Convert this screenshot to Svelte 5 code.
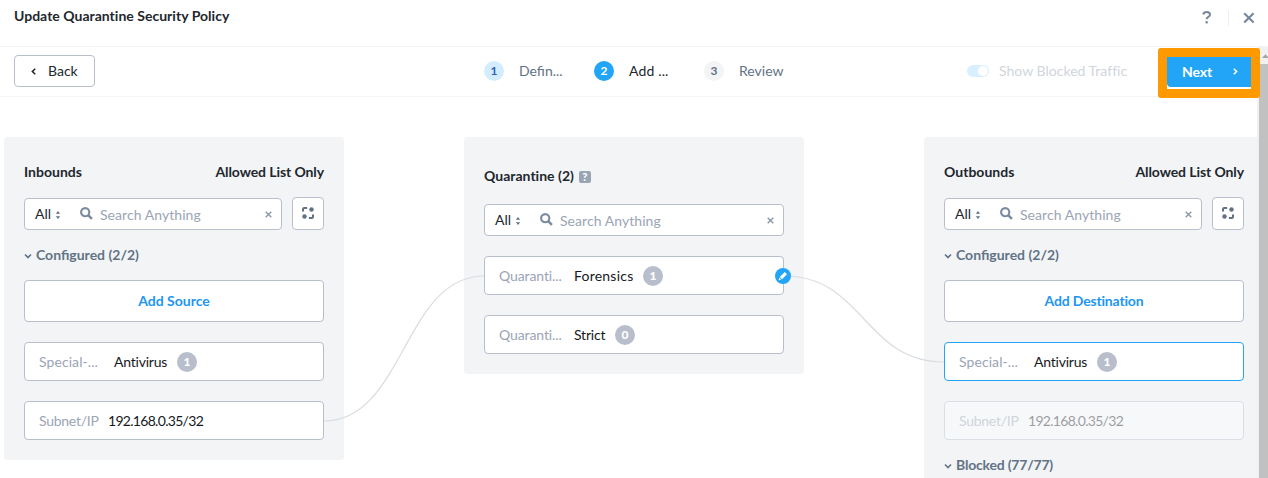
<script>
  const steps = [
    { n: 1, label: 'Defin...', state: 'done' },
    { n: 2, label: 'Add ...', state: 'current' },
    { n: 3, label: 'Review', state: 'todo' }
  ];
</script>

{#snippet search()}
  <div class="search">
    <span class="all">All</span>
    <svg class="sort" width="6" height="8" viewBox="0 0 6 8"><path d="M.8 2.7 3 0l2.2 2.7zM.8 5.3 3 8l2.2-2.7z" fill="#627386" /></svg>
    <svg class="lens" width="13" height="13" viewBox="0 0 13 13" fill="none" stroke="#7b8ba0" stroke-width="2.1"><circle cx="5.2" cy="5.2" r="4.1" /><path d="m8.2 8.2 3.7 3.7" stroke-width="2.5" /></svg>
    <span class="placeholder">Search Anything</span>
    <svg class="clear" width="7" height="7" viewBox="0 0 7 7"><path d="m.7.7 5.6 5.6M6.3.7.7 6.3" stroke="#8a98ab" stroke-width="1.4" /></svg>
  </div>
{/snippet}

{#snippet searchRow()}
  <div class="search-row">
    {@render search()}
    <button class="expand" aria-label="Expand">
      <svg width="12" height="12" viewBox="0 0 12 12" fill="none" stroke="#5f7183" stroke-width="2"><path d="M1 4.6V2.2Q1 1 2.2 1h2.9M11 7.4v2.4q0 1.2-1.2 1.2H6.9" /><circle cx="9.5" cy="2.5" r="2.2" fill="#5f7183" stroke="none" /><circle cx="2.5" cy="9.5" r="2.2" fill="#5f7183" stroke="none" /></svg>
    </button>
  </div>
{/snippet}

{#snippet section(label, blocked)}
  <div class="section" class:blocked>
    <svg width="8" height="6" viewBox="0 0 8 6" fill="none" stroke="#627386" stroke-width="1.6"><path d="m1 1.5 3 3 3-3" /></svg>
    <span>{label}</span>
  </div>
{/snippet}

{#snippet special()}
  <span class="kind fixed special">Special-...</span><span class="name antivirus">Antivirus</span><span class="count">1</span>
{/snippet}

{#snippet subnet()}
  <span class="kind subnet">Subnet/IP</span><span class="name ip">192.168.0.35/32</span>
{/snippet}

<div class="page">
  <header>
    <h1>Update Quarantine Security Policy</h1>
    <div class="header-actions">
      <svg class="help" width="10" height="13" viewBox="0 0 10 13" fill="none"><path d="M1.2 3.4C1.6 1.8 2.8 1 4.6 1c2 0 3.4 1 3.4 2.7C8 6 4.6 5.8 4.6 8.3" stroke="#76879d" stroke-width="2" /><path d="M3.5 10.2h2.3v2.2H3.5z" fill="#76879d" /></svg>
      <i></i>
      <svg width="12" height="12" viewBox="0 0 12 12"><path d="m1.2 1.2 9.4 9.4M10.6 1.2l-9.4 9.4" stroke="#76879d" stroke-width="2.1" /></svg>
    </div>
  </header>

  <div class="toolbar">
    <button class="back">
      <svg width="5" height="7" viewBox="0 0 5 7" fill="none" stroke="#22272e" stroke-width="1.6"><path d="M4.2.7 1.4 3.5l2.8 2.8" /></svg>
      <span>Back</span>
    </button>
    <div class="steps">
      {#each steps as s}
        <div class="step {s.state}"><b>{s.n}</b><span>{s.label}</span></div>
      {/each}
    </div>
    <div class="toggle"><i></i><span>Show Blocked Traffic</span></div>
    <div class="highlight">
      <button class="next">
        <span>Next</span>
        <svg width="5" height="7" viewBox="0 0 5 7" fill="none" stroke="#fff" stroke-width="1.6"><path d="M.8.7l2.8 2.8L.8 6.3" /></svg>
      </button>
    </div>
  </div>

  <main>
    <section class="panel">
      <div class="title"><h2>Inbounds</h2><h2 class="allowed">Allowed List Only</h2></div>
      {@render searchRow()}
      {@render section('Configured (2/2)', false)}
      <button class="card add">Add Source</button>
      <div class="card">{@render special()}</div>
      <div class="card">{@render subnet()}</div>
    </section>

    <section class="panel middle">
      <div class="title">
        <h2>Quarantine (2)</h2>
        <span class="hint">?</span>
      </div>
      {@render search()}
      <div class="card">
        <span class="kind fixed quaranti">Quaranti...</span><span class="name forensics">Forensics</span><span class="count">1</span>
        <span class="edit">
          <svg width="10" height="10" viewBox="0 0 10 10" fill="#fff"><path d="M6.8 1 9 3.2 4 8.2 1.8 6z" /><path d="m1.2 6.8 2 2L.7 9.3z" /></svg>
        </span>
      </div>
      <div class="card"><span class="kind fixed quaranti">Quaranti...</span><span class="name strict">Strict</span><span class="count">0</span></div>
    </section>

    <section class="panel out">
      <div class="title"><h2>Outbounds</h2><h2 class="allowed">Allowed List Only</h2></div>
      {@render searchRow()}
      {@render section('Configured (2/2)', false)}
      <button class="card add dst">Add Destination</button>
      <div class="card selected">{@render special()}</div>
      <div class="card faded">{@render subnet()}</div>
      {@render section('Blocked (77/77)', true)}
    </section>

    <svg class="links" width="1257" height="381" viewBox="0 97 1257 381" fill="none" stroke="#d9dce0" stroke-width="1.2">
      <path d="M324 421C404 421 404 276 484 276" />
      <path d="M784 276C864 276 864 362 944 362" />
    </svg>
    <div class="scrollbar">
      <svg width="9" height="17" viewBox="0 0 9 17"><path d="M3 11h7L6.5 7.2z" fill="#a3a3a3" /></svg>
      <div class="thumb"></div>
    </div>
  </main>
</div>

<style>
  :global(body) { margin: 0; overflow: hidden; background: #fff; }
  * { box-sizing: border-box; }
  .page {
    width: 1268px; height: 478px; overflow: hidden; display: flex; flex-direction: column;
    font: 14px/20px Lato, sans-serif; color: #22272e; white-space: nowrap;
  }
  button { font: inherit; color: inherit; margin: 0; }
  svg { display: block; flex: none; overflow: visible; }
  h1, h2 { margin: 0; font-size: 14px; font-weight: 700; line-height: 20px; letter-spacing: .02px; }
  header { height: 47px; flex: none; display: flex; justify-content: space-between; padding: 6px 13px 0 14px; border-bottom: 1px solid #f2f4f6; }
  .header-actions { display: flex; align-items: center; height: 24px; }
  .header-actions i { width: 1px; height: 16px; background: #eceef1; margin: 0 14px 0 16px; }
  .help { margin-top: -2px; }
  .toolbar { height: 50px; flex: none; display: flex; align-items: flex-start; padding: 0 8px 0 14px; border-bottom: 1px solid #f2f4f6; }
  .back { width: 81px; height: 32px; margin-top: 8px; padding: 0 0 0 16px; display: flex; align-items: center; gap: 12px; border: 1px solid #b8becc; border-radius: 4px; background: #fff; }
  .steps { display: flex; height: 48px; align-items: center; margin-left: 389px; }
  .step { width: 110px; display: flex; align-items: center; gap: 15px; color: #627386; }
  .step b { width: 20px; height: 20px; border-radius: 50%; text-align: center; font-size: 12px; background: #f2f4f6; }
  .done b { background: #d3edff; color: #3561b3; }
  .step.current { color: #22272e; letter-spacing: .15px; }
  .current b { background: #22a5f7; color: #fff; }
  .toggle { display: flex; align-items: center; height: 48px; gap: 10px; margin-left: 153px; color: #d0d5dd; letter-spacing: .02px; }
  .toggle i { width: 22px; height: 12px; border-radius: 6px; background: #d7effe; display: flex; justify-content: flex-end; padding: 1px; }
  .toggle i::after { content: ''; width: 10px; height: 10px; border-radius: 50%; background: #fff; }
  .highlight { width: 102px; height: 50px; margin: 1px 0 0 auto; border: 9px solid #ff9900; border-radius: 3px; background: #fff; position: relative; z-index: 3; }
  .next { width: 84px; height: 30px; border: 0; border-radius: 0 0 0 4px; background: #22a5f7; color: #fff; display: flex; align-items: center; justify-content: space-between; padding: 0 13px 1px 15px; font-weight: 700; letter-spacing: -.1px; }

  main { position: relative; flex: 1; display: flex; align-items: flex-start; gap: 120px; padding: 40px 0 0 4px; min-height: 0; }
  .panel { width: 340px; flex: none; padding: 25px 20px 20px; background: #f2f4f6; border-radius: 4px; display: flex; flex-direction: column; }
  .middle { padding-top: 29px; }
  .out { width: 333px; height: 360px; padding-right: 0; border-radius: 4px 0 0; }
  .out > :global(*) { width: 300px; }
  .title { display: flex; justify-content: space-between; height: 20px; align-items: center; }
  .allowed { letter-spacing: -.09px; }
  .middle .title { justify-content: flex-start; gap: 5px; margin-bottom: 18px; }
  .hint { width: 12px; height: 12px; margin-top: 2px; border-radius: 2px; background: #99a4b5; color: #fff; font: 900 11px/12px Lato, sans-serif; text-align: center; }
  .search-row { display: flex; align-items: flex-end; gap: 10px; margin-top: 15px; height: 33px; }
  .search { height: 32px; flex: 1 0 auto; display: flex; align-items: center; padding: 0 9px 0 10px; border: 1px solid #b8becc; border-radius: 4px; background: #fff; }
  .all { width: 16px; }
  .sort { margin-left: 4px; margin-top: 2px; }
  .lens { margin-left: 19px; margin-top: -1px; }
  .placeholder { margin-left: 7px; margin-top: 2px; color: #9aa5b5; letter-spacing: .06px; }
  .clear { margin-left: auto; }
  .expand { width: 32px; height: 33px; padding: 0 0 1px; display: flex; align-items: center; justify-content: center; border: 1px solid #b8becc; border-radius: 4px; background: #fff; }
  .section { display: flex; align-items: center; gap: 4px; height: 20px; margin-top: 15px; color: #627386; font-weight: 700; }
  .section svg { margin-top: 2px; }
  .blocked { letter-spacing: -.2px; }
  .card { position: relative; z-index: 1; height: 39px; margin-top: 20px; flex: none; display: flex; align-items: center; padding: 0 14px; border: 1px solid #b8becc; border-radius: 4px; background: #fff; }
  .add { height: 42px; margin-top: 15px; justify-content: center; color: #2196f3; font-weight: 700; }
  .dst { letter-spacing: -.17px; }
  .selected { border-color: #22a5f7; }
  .faded { opacity: .4; }
  .kind { color: #9aa5b5; margin-right: 10px; }
  .fixed { width: 65px; }
  .special { letter-spacing: .08px; }
  .quaranti { letter-spacing: -.1px; }
  .subnet { width: 60px; margin-right: 9px; letter-spacing: -.26px; }
  .name { color: #16191d; }
  .antivirus { width: 53px; letter-spacing: -.22px; }
  .forensics { width: 59px; letter-spacing: .22px; }
  .strict { width: 31px; letter-spacing: -.2px; }
  .ip { letter-spacing: -.7px; }
  .count { width: 20px; height: 20px; margin-left: 10px; border-radius: 50%; background: #b8becc; color: #fff; font-size: 12px; font-weight: 900; text-align: center; }
  .edit { position: absolute; right: -8px; top: 11px; width: 16px; height: 16px; border-radius: 50%; background: #22a5f7; display: flex; align-items: center; justify-content: center; }
  .links { position: absolute; left: 0; top: 0; }
  .scrollbar { position: absolute; right: 0; top: -50px; bottom: 0; width: 11px; background: #f1f1f1; padding-left: 2px; }
  .thumb { height: 420px; background: #c1c1c1; }
</style>
